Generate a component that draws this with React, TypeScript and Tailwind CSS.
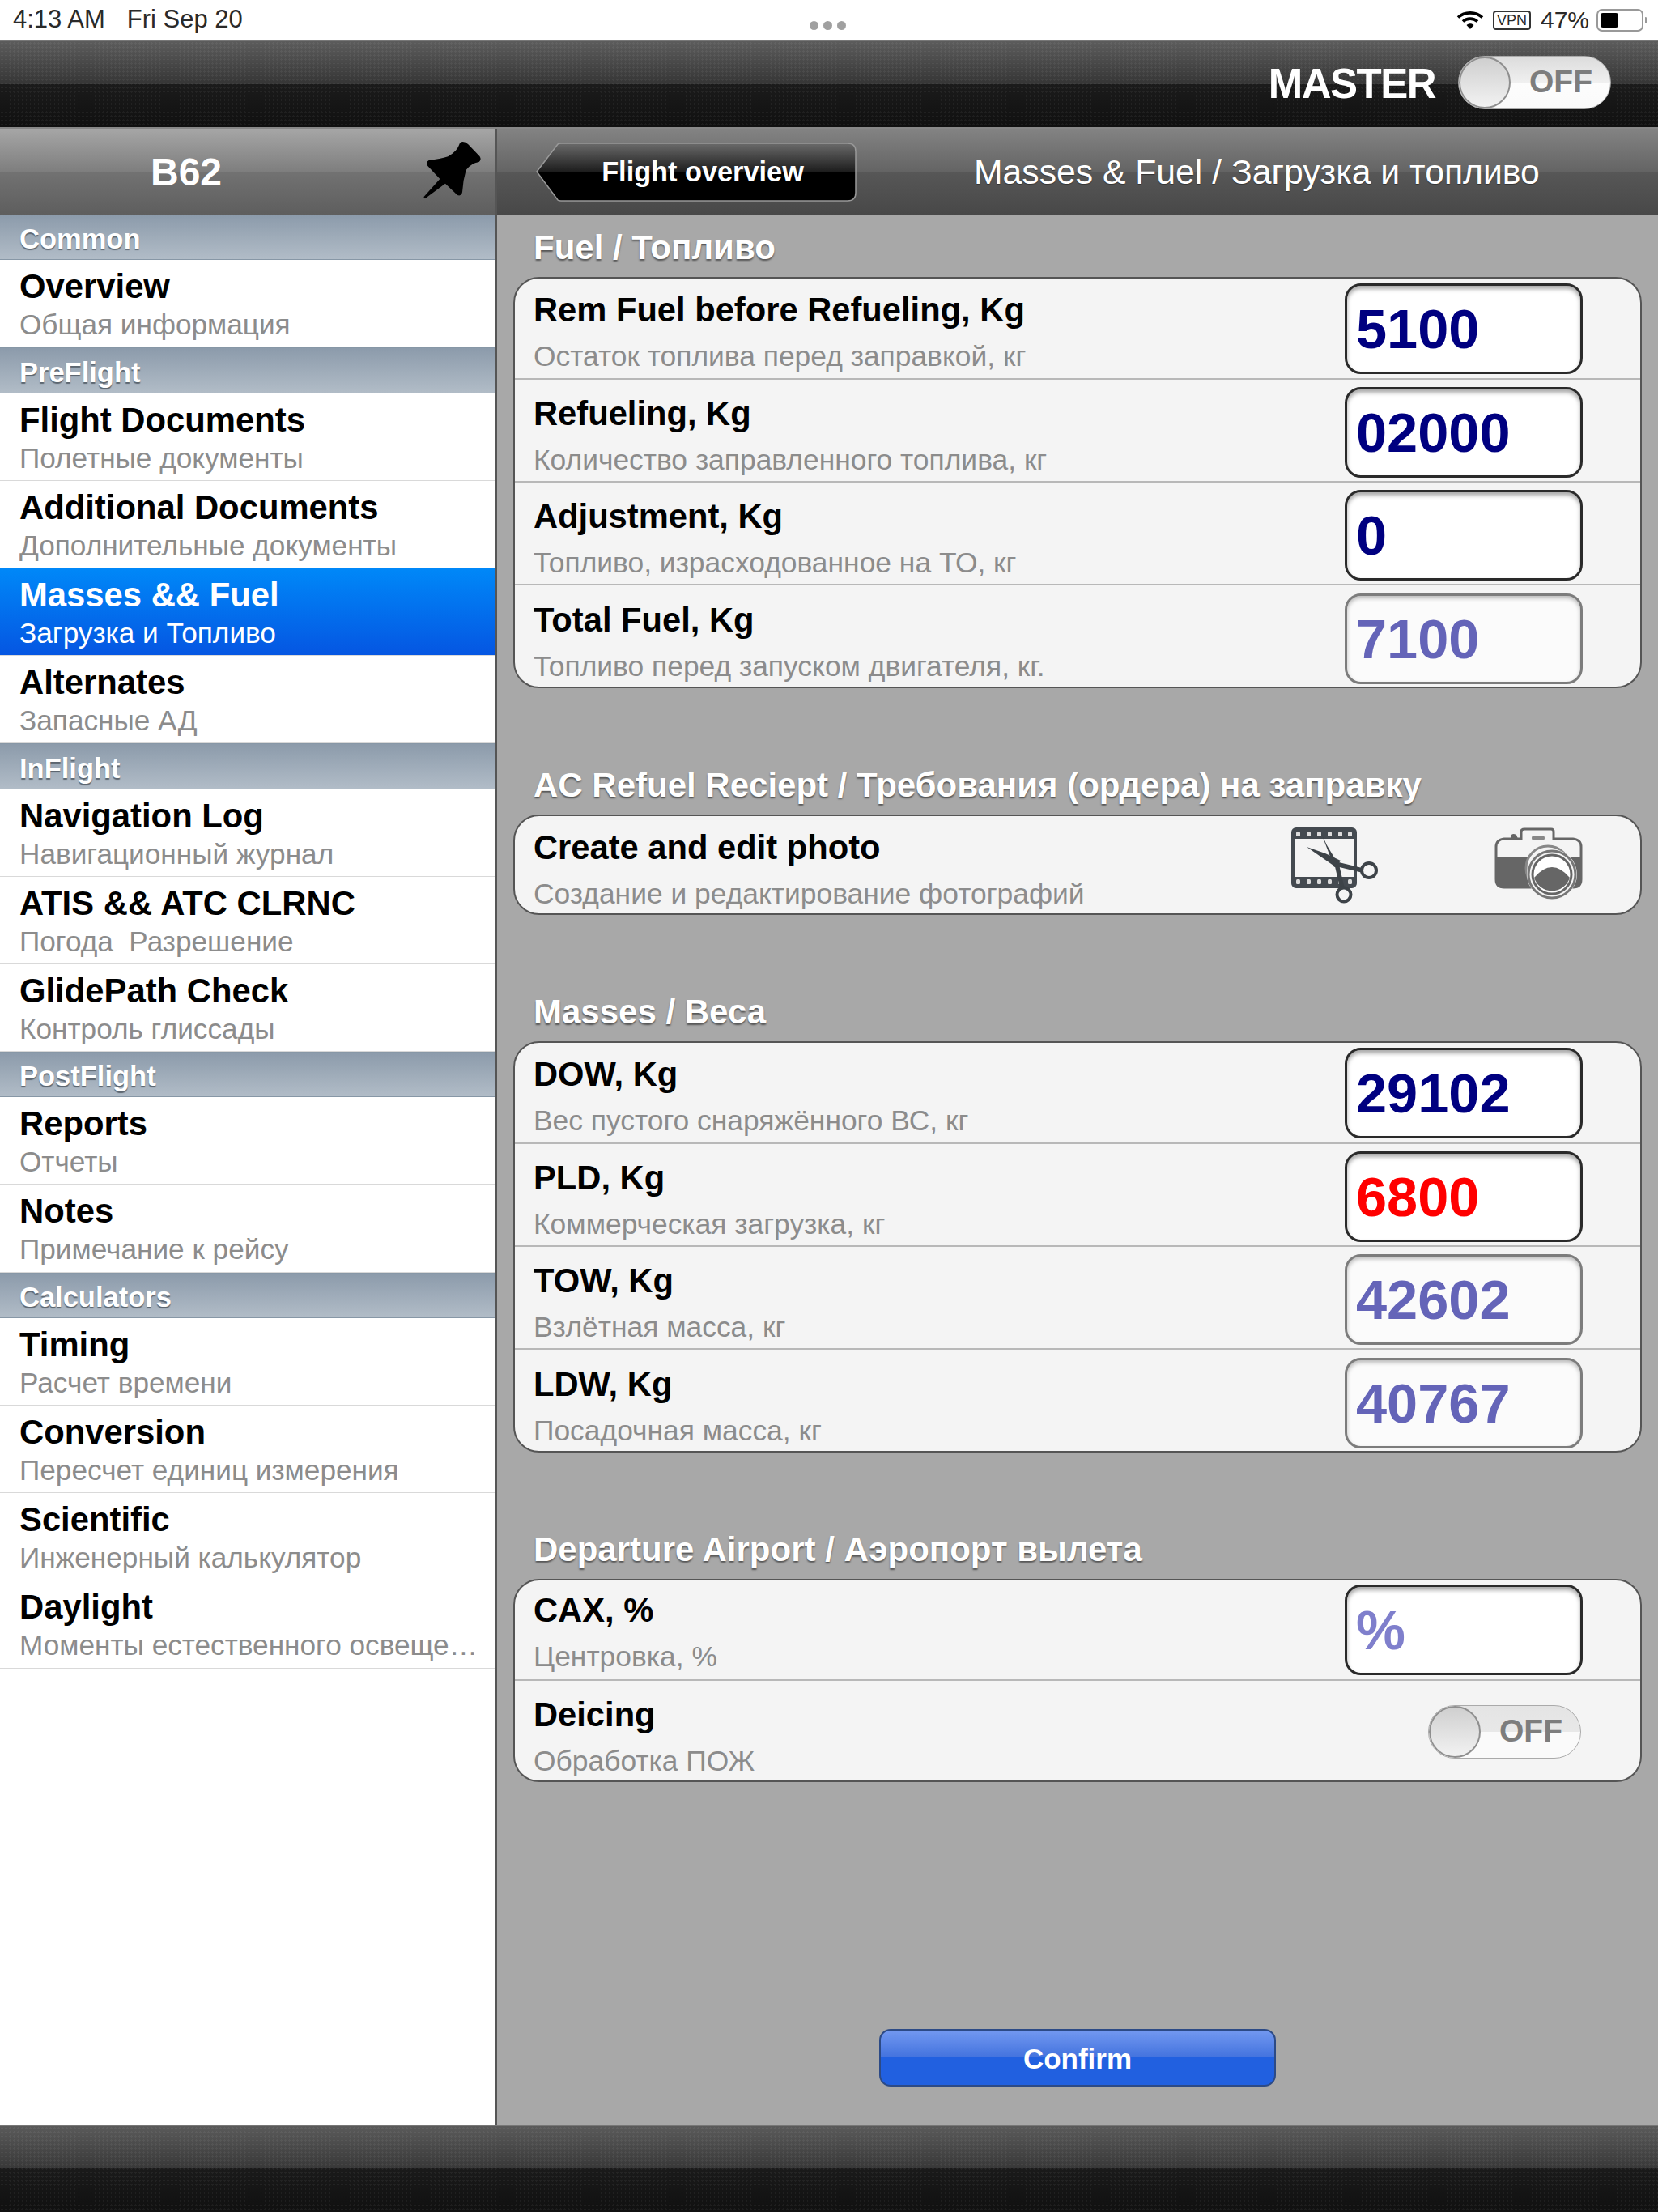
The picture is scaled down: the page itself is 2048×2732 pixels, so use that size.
import type { ReactNode } from 'react'

const font = 'font-["Liberation_Sans",Arial,sans-serif]'

type NavRow = { title: string; sub: string; active?: boolean }
type NavSection = { name: string; rows: NavRow[] }

const nav: NavSection[] = [
  { name: 'Common', rows: [{ title: 'Overview', sub: 'Общая информация' }] },
  {
    name: 'PreFlight',
    rows: [
      { title: 'Flight Documents', sub: 'Полетные документы' },
      { title: 'Additional Documents', sub: 'Дополнительные документы' },
      { title: 'Masses && Fuel', sub: 'Загрузка и Топливо', active: true },
      { title: 'Alternates', sub: 'Запасные АД' },
    ],
  },
  {
    name: 'InFlight',
    rows: [
      { title: 'Navigation Log', sub: 'Навигационный журнал' },
      { title: 'ATIS && ATC CLRNC', sub: 'Погода  Разрешение' },
      { title: 'GlidePath Check', sub: 'Контроль глиссады' },
    ],
  },
  {
    name: 'PostFlight',
    rows: [
      { title: 'Reports', sub: 'Отчеты' },
      { title: 'Notes', sub: 'Примечание к рейсу' },
    ],
  },
  {
    name: 'Calculators',
    rows: [
      { title: 'Timing', sub: 'Расчет времени' },
      { title: 'Conversion', sub: 'Пересчет единиц измерения' },
      { title: 'Scientific', sub: 'Инженерный калькулятор' },
      { title: 'Daylight', sub: 'Моменты естественного освеще…' },
    ],
  },
]

function Toggle({ small }: { small?: boolean }) {
  return (
    <div
      className={`relative h-[66px] w-[189px] overflow-hidden rounded-full border border-[#aaa] ${
        small ? 'bg-[linear-gradient(#e4e4e4_0,#e8e8e8_50%,#fafafa_50%,#fafafa_100%)]' : 'bg-[linear-gradient(#dcdcdc_0,#f0f0f0_50%,#fdfdfd_50%,#fafafa_100%)]'
      }`}
    >
      <span className="absolute right-[22px] top-[11px] text-[39px] font-bold leading-[40px] text-[#7d7d7d]">OFF</span>
      <div className="absolute left-0 top-0 h-[64px] w-[64px] rounded-full border-2 border-[#8f8f8f] bg-[linear-gradient(#cfcfcf,#f2f2f2)]" />
    </div>
  )
}

function Field({ value, tone }: { value: string; tone: 'navy' | 'red' | 'muted' | 'hint' }) {
  const color = { navy: 'text-[#000080]', red: 'text-[#ff0000]', muted: 'text-[#6464b8]', hint: 'text-[#7f7fcc]' }[tone]
  const box =
    tone === 'muted'
      ? 'border-[#7c7c7c] bg-[#fbfbfb] shadow-[inset_0_3px_5px_#bbb]'
      : 'border-[#2a2a2a] bg-white shadow-[inset_0_4px_5px_#aaa]'
  return (
    <div className={`flex h-[112px] w-[294px] items-center rounded-[20px] border-[3px] pl-[11px] pt-[2px] ${box}`}>
      <span className={`text-[68.5px] font-bold leading-none ${color}`}>{value}</span>
    </div>
  )
}

function Row({ title, sub, height, pad, last, right }: { title: string; sub: string; height: string; pad: string; last?: boolean; right?: ReactNode }) {
  return (
    <div className={`flex ${height} ${last ? '' : 'border-b-2 border-[#b8b8b8]'}`}>
      <div className={`flex-1 pl-[23px] ${pad}`}>
        <div className="text-[41.7px] font-bold leading-[46px] text-black">{title}</div>
        <div className="mt-[14px] text-[35.4px] leading-[40px] text-[#8c8c8c]">{sub}</div>
      </div>
      {right}
    </div>
  )
}

function FieldSlot({ pad, children }: { pad: string; children: ReactNode }) {
  return <div className={`w-[365px] shrink-0 ${pad}`}>{children}</div>
}

function Group({ title, children }: { title: string; children: ReactNode }) {
  return (
    <section className="mb-[79px]">
      <h2 className="flex h-[77px] items-center pl-[25px] pt-[4px] text-[42px] font-bold text-white [text-shadow:0_2px_2px_#555]">{title}</h2>
      <div className="overflow-hidden rounded-[32px] border-2 border-[#555] bg-[#f4f4f4]">{children}</div>
    </section>
  )
}

function FilmCut() {
  return (
    <svg width="108" height="94" viewBox="0 0 108 94" fill="none">
      <rect x="2" y="2" width="77" height="71" rx="4" stroke="#444a50" strokeWidth="4" />
      <path d="M2 2H79V14H2ZM2 61H79V73H2Z" fill="#444a50" />
      {[8, 21, 34, 47, 60, 72].map((x) => (
        <g key={x} fill="#ddd">
          <rect x={x - 2} y="5" width="5" height="6" rx="1.5" />
          <rect x={x - 2} y="64" width="5" height="6" rx="1.5" />
        </g>
      ))}
      <path d="M37 7L44 22L59 47L53 49Z" fill="#3d4348" />
      <path d="M19 24L42 32L61 41L55 49Z" fill="#3d4348" />
      <path d="M55 45L88 53M56 45L63 75" stroke="#3d4348" strokeWidth="5.5" />
      <circle cx="96" cy="53" r="9" fill="#f4f4f4" stroke="#3d4348" strokeWidth="4" />
      <circle cx="65" cy="83" r="8.5" fill="#f4f4f4" stroke="#3d4348" strokeWidth="4" />
    </svg>
  )
}

function Camera() {
  return (
    <svg width="109" height="90" viewBox="0 0 109 90">
      <path d="M20 14L21 9Q23 7 27 9L29 14Z" fill="#666" />
      <path d="M33 14V5Q33 2 37 2H70Q73 2 73 5V14H97Q107 15 107 24V64Q107 74 97 74H12Q2 74 2 64V24Q2 15 12 14Z" fill="#f4f4f4" stroke="#666" strokeWidth="3" />
      <path d="M1 36H107V64Q107 75 97 75H12Q1 75 1 64Z" fill="#666" />
      <rect x="46" y="10" width="16" height="6" rx="3" fill="#888" />
      <circle cx="66" cy="50" r="27" fill="#f4f4f4" stroke="#888" strokeWidth="3" />
      <circle cx="71" cy="58" r="31" fill="#f4f4f4" />
      <circle cx="71" cy="58" r="29" fill="#f4f4f4" stroke="#777" strokeWidth="3" />
      <circle cx="71" cy="58" r="24" fill="#fff" stroke="#666" strokeWidth="3" />
      <path d="M49 62A23 23 0 0 0 93 62Q71 36 49 62Z" fill="#666" />
    </svg>
  )
}

function Pin() {
  return (
    <svg width="100" height="100" viewBox="0 0 300 300">
      <path d="M185 45Q195 45 205 55L248 100Q255 112 245 120Q215 125 197 150Q185 190 183 232Q180 248 165 243L120 200L45 256L40 250L100 183L55 135Q45 122 60 113Q100 110 130 100Q165 80 172 55Q175 45 185 45Z" fill="#000" />
    </svg>
  )
}

function Wifi() {
  return (
    <svg width="34" height="24" viewBox="0 0 34 24" fill="none" stroke="#000" strokeWidth="3.6">
      <path d="M2 8.5C10 1 24 1 32 8.5" />
      <path d="M8 13.5C13 9 21 9 26 13.5" />
      <path d="M17 23L12.5 18C15 15.6 19 15.6 21.5 18Z" fill="#000" stroke="none" />
    </svg>
  )
}

const panel = 'bg-[radial-gradient(rgba(255,255,255,0.05)_1px,transparent_1.2px)] bg-[length:5px_5px]'

export default function App() {
  return (
    <div className={`flex h-[2732px] w-[2048px] flex-col overflow-hidden bg-white ${font}`}>
      <div className="relative flex h-[49px] shrink-0 items-center justify-between pl-[16px] pr-[18px] text-[31px] text-[#2a2a2a]">
        <div className="flex gap-[27px]">
          <span>4:13 AM</span>
          <span>Fri Sep 20</span>
        </div>
        <div className="absolute left-[1000px] top-[26px] flex gap-[6px]">
          <i className="h-[11px] w-[11px] rounded-full bg-[#a0a0a0]" />
          <i className="h-[11px] w-[11px] rounded-full bg-[#a0a0a0]" />
          <i className="h-[11px] w-[11px] rounded-full bg-[#a0a0a0]" />
        </div>
        <div className="flex items-center text-[30px]">
          <Wifi />
          <span className="ml-[11px] rounded-[4px] border-2 border-[#333] px-[3px] text-[18px] leading-[20px]">VPN</span>
          <span className="ml-[12px]">47%</span>
          <div className="relative ml-[9px] flex h-[28px] w-[58px] items-center rounded-[7px] border-2 border-[#999] p-[3px]">
            <div className="h-[18px] w-[22px] rounded-[3px] bg-black" />
            <div className="absolute -right-[7px] top-[8px] h-[8px] w-[3px] rounded-r-full bg-[#999]" />
          </div>
        </div>
      </div>

      <div className="relative h-[108px] shrink-0 border-t-2 border-[#777] bg-[linear-gradient(#5c5c5c_0,#353535_50%,#1b1b1b_50%,#101010_100%)]">
        <div className={`absolute inset-0 ${panel}`} />
        <div className="absolute right-[58px] top-[18px] flex items-center gap-[28px]">
          <span className="h-[66px] text-[51px] font-bold leading-[70px] tracking-[-1.5px] text-white">MASTER</span>
          <Toggle />
        </div>
      </div>

      <div className="flex min-h-0 flex-1 border-t-2 border-[#888]">
        <aside className="flex w-[614px] shrink-0 flex-col border-r-2 border-[#555] bg-white">
          <div className="relative flex h-[106px] shrink-0 items-center bg-[linear-gradient(#a6a6a6_0,#7e7e7e_50%,#727272_50%,#5e5e5e_100%)]">
            <span className="w-[460px] pt-[2px] text-center text-[48px] font-bold text-white">B62</span>
            <div className="absolute left-[510px] top-[1px]">
              <Pin />
            </div>
          </div>
          {nav.map((s) => (
            <div key={s.name}>
              <div className="flex h-[56.2px] items-center border-y border-[#8797a6] bg-[linear-gradient(#8c9bab,#b1bcc7)] pl-[24px] pt-[6px] text-[34.5px] font-bold text-white [text-shadow:0_2px_1px_#5c6670]">
                {s.name}
              </div>
              {s.rows.map((r) => (
                <div
                  key={r.title}
                  className={`h-[108.2px] border-b border-[#d9d9d9] pl-[24px] pt-[10px] ${
                    r.active ? 'bg-[linear-gradient(#0088f8,#0556e2)]' : 'bg-white'
                  }`}
                >
                  <div className={`whitespace-nowrap text-[41.8px] font-bold leading-[46px] ${r.active ? 'text-white' : 'text-black'}`}>{r.title}</div>
                  <div className={`mt-[4px] whitespace-pre text-[35.2px] leading-[40px] ${r.active ? 'text-white' : 'text-[#8c8c8c]'}`}>{r.sub}</div>
                </div>
              ))}
            </div>
          ))}
        </aside>

        <main className="flex min-w-0 flex-1 flex-col bg-[#a8a8a8]">
          <div className="relative flex h-[106px] shrink-0 items-center bg-[linear-gradient(#838383_0,#646464_50%,#575757_50%,#484848_100%)] pl-[48px]">
            <button className="relative flex h-[73px] w-[396px] items-center justify-center pl-[16px] pt-[2px] text-[34.3px] font-bold text-white">
              <svg className="absolute inset-0" width="396" height="73" viewBox="0 0 396 73">
                <defs>
                  <linearGradient id="back" x1="0" y1="0" x2="0" y2="1">
                    <stop offset="0" stopColor="#6a6a6a" />
                    <stop offset="0.5" stopColor="#1c1c1c" />
                    <stop offset="0.5" stopColor="#000" />
                    <stop offset="1" stopColor="#000" />
                  </linearGradient>
                </defs>
                <path d="M1 36L27 2Q28 1 31 1H385Q395 1 395 11V62Q395 72 385 72H31Q28 72 27 71Z" fill="url(#back)" stroke="#999" strokeWidth="1.5" />
              </svg>
              <span className="relative">Flight overview</span>
            </button>
            <span className="ml-[145px] whitespace-nowrap text-[42.7px] text-white [text-shadow:0_1px_1px_#333]">Masses &amp; Fuel / Загрузка и топливо</span>
          </div>

          <div className="flex flex-1 flex-col px-[20px]">
            <Group title="Fuel / Топливо">
              <Row height="h-[125px]" pad="pt-[16px]" title="Rem Fuel before Refueling, Kg" sub="Остаток топлива перед заправкой, кг" right={<FieldSlot pad="pt-[6px]"><Field value="5100" tone="navy" /></FieldSlot>} />
              <Row height="h-[127px]" pad="pt-[19px]" title="Refueling, Kg" sub="Количество заправленного топлива, кг" right={<FieldSlot pad="pt-[9px]"><Field value="02000" tone="navy" /></FieldSlot>} />
              <Row height="h-[127px]" pad="pt-[19px]" title="Adjustment, Kg" sub="Топливо, израсходованное на ТО, кг" right={<FieldSlot pad="pt-[9px]"><Field value="0" tone="navy" /></FieldSlot>} />
              <Row height="h-[125px]" pad="pt-[20px]" title="Total Fuel, Kg" sub="Топливо перед запуском двигателя, кг." last right={<FieldSlot pad="pt-[10px]"><Field value="7100" tone="muted" /></FieldSlot>} />
            </Group>

            <Group title="AC Refuel Reciept / Требования (ордера) на заправку">
              <Row
                height="h-[120px]"
                pad="pt-[16px]"
                title="Create and edit photo"
                sub="Создание и редактирование фотографий"
                last
                right={
                  <div className="flex w-[431px] shrink-0 gap-[143px] pt-[14px]">
                    <FilmCut />
                    <Camera />
                  </div>
                }
              />
            </Group>

            <Group title="Masses / Веса">
              <Row height="h-[125px]" pad="pt-[16px]" title="DOW, Kg" sub="Вес пустого снаряжённого ВС, кг" right={<FieldSlot pad="pt-[6px]"><Field value="29102" tone="navy" /></FieldSlot>} />
              <Row height="h-[127px]" pad="pt-[19px]" title="PLD, Kg" sub="Коммерческая загрузка, кг" right={<FieldSlot pad="pt-[9px]"><Field value="6800" tone="red" /></FieldSlot>} />
              <Row height="h-[127px]" pad="pt-[19px]" title="TOW, Kg" sub="Взлётная масса, кг" right={<FieldSlot pad="pt-[9px]"><Field value="42602" tone="muted" /></FieldSlot>} />
              <Row height="h-[125px]" pad="pt-[20px]" title="LDW, Kg" sub="Посадочная масса, кг" last right={<FieldSlot pad="pt-[10px]"><Field value="40767" tone="muted" /></FieldSlot>} />
            </Group>

            <Group title="Departure Airport / Аэропорт вылета">
              <Row height="h-[124px]" pad="pt-[14px]" title="CAX, %" sub="Центровка, %" right={<FieldSlot pad="pt-[5px]"><Field value="%" tone="hint" /></FieldSlot>} />
              <Row
                height="h-[123px]"
                pad="pt-[19px]"
                title="Deicing"
                sub="Обработка ПОЖ"
                last
                right={
                  <div className="w-[262px] shrink-0 pt-[30px]">
                    <Toggle small />
                  </div>
                }
              />
            </Group>

            <button className="mb-[47px] mt-auto flex h-[71px] w-[490px] items-center justify-center self-center rounded-[14px] border-2 border-[#2c4a86] bg-[linear-gradient(#7298f0_0,#4272de_50%,#2160e0_50%,#2160e0_100%)] pt-[3px] text-[35px] font-bold text-white">
              Confirm
            </button>
          </div>
        </main>
      </div>

      <div className="relative h-[108px] shrink-0 border-t-2 border-[#777] bg-[linear-gradient(#5a5a5a_0,#383838_49%,#1a1a1a_49%,#101010_100%)]">
        <div className={`absolute inset-0 ${panel}`} />
      </div>
    </div>
  )
}
